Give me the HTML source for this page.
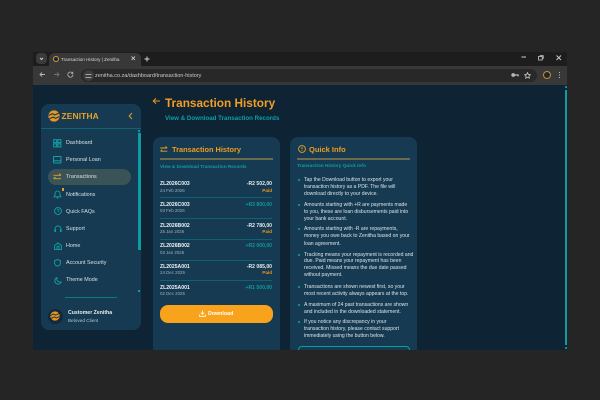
<!DOCTYPE html>
<html><head><meta charset="utf-8"><title>Transaction History | Zenitha</title>
<style>
html{background:#252525}
html,body{margin:0;padding:0;width:600px;height:400px;overflow:hidden;font-family:"Liberation Sans",sans-serif}
body{background:#252525;filter:blur(.25px)}
*{box-sizing:border-box}
div,span.a{position:absolute}
.t{position:absolute;white-space:nowrap;line-height:10px;height:10px}
.nav{left:66px;font-size:5.4px;color:#d5e0e4}
.id{left:160px;font-size:5.1px;color:#f0f4f5;font-weight:bold}
.dt{left:160px;font-size:4.4px;color:#9db0b8}
.am{right:328px;font-size:5.1px;font-weight:bold;color:#e6ecee}
.pl{color:#0d9a9f}
.pd{right:328px;font-size:4.6px;font-weight:bold;color:#f5941d}
.dv{left:160px;width:112px;height:1.2px;background:#0f6272}
.q{left:304px;font-size:5.1px;color:#dbe4e7}
.b{left:298px;width:2px;height:2px;border-radius:50%;background:#13a5aa}
svg{position:absolute;overflow:visible}
</style></head><body>
<!-- chrome -->
<div style="left:33px;top:52px;width:534px;height:14px;background:#1d1d1d"></div>
<div style="left:33px;top:66px;width:534px;height:19px;background:#383838"></div>
<div style="left:36px;top:53px;width:11px;height:11px;border-radius:4px;background:#3b3b3b"></div>
<svg style="left:36px;top:53px" width="11" height="11"><path d="M4 5l1.5 1.5L7 5" fill="none" stroke="#ccc" stroke-width="1"/></svg>
<div style="left:49px;top:53px;width:92px;height:14px;border-radius:5px 5px 0 0;background:#383838"></div>
<div style="left:53px;top:56px;width:6px;height:6px;border-radius:50%;background:#10283a;border:1px solid #e0992a"></div>
<div class="t" style="left:61px;top:54.5px;font-size:4.6px;color:#d8d8d8">Transaction History | Zenitha</div>
<svg style="left:131px;top:56px" width="5" height="5"><path d="M.5 .5l3.5 3.5M4 .5L.5 4" stroke="#ddd" stroke-width=".8"/></svg>
<svg style="left:144px;top:56px" width="6" height="6"><path d="M3 .5v5M.5 3h5" stroke="#ddd" stroke-width=".9"/></svg>
<svg style="left:39px;top:71px" width="7" height="7"><path d="M6 3.5H1M3 1.5l-2 2 2 2" fill="none" stroke="#b5b5b5" stroke-width=".9"/></svg>
<svg style="left:53px;top:71px" width="7" height="7"><path d="M1 3.5h5M4 1.5l2 2-2 2" fill="none" stroke="#717171" stroke-width=".9"/></svg>
<svg style="left:67px;top:71px" width="7" height="7"><path d="M5.6 2.2A2.6 2.6 0 1 0 6 3.5M5.8 .8v1.7H4.1" fill="none" stroke="#b5b5b5" stroke-width=".8"/></svg>
<div style="left:81px;top:69px;width:456px;height:13px;border-radius:7px;background:#282828"></div>
<div style="left:83px;top:70px;width:11px;height:11px;border-radius:50%;background:#3c3c3c"></div>
<svg style="left:85px;top:72.5px" width="7" height="6"><path d="M.5 1.5h6M.5 4.5h6" stroke="#c8c8c8" stroke-width=".8"/></svg>
<div class="t" style="left:95px;top:70.5px;font-size:5.5px;color:#c9c9c9">zenitha.co.za/dashboard/transaction-history</div>
<svg style="left:511px;top:72px" width="8" height="6"><circle cx="2.2" cy="3" r="1.9" fill="#b8b8b8"/><path d="M4 2.4h3.8v2H6.5v-.8H4z" fill="#b8b8b8"/></svg>
<svg style="left:523.5px;top:71.5px" width="7" height="7"><path d="M3.5 .6l.9 1.9 2 .3-1.5 1.4.4 2-1.8-1-1.8 1 .4-2L.6 2.8l2-.3z" fill="none" stroke="#c8c8c8" stroke-width=".8"/></svg>
<div style="left:543px;top:71px;width:8px;height:8px;border-radius:50%;background:#14293a;border:1.5px solid #d48a1f"></div>
<div style="left:559px;top:72px;width:1px;height:1px;background:#bbb;box-shadow:0 2.5px #bbb,0 5px #bbb"></div>
<svg style="left:521px;top:55px" width="6" height="4"><path d="M.5 2h4.5" stroke="#ccc" stroke-width="1"/></svg>
<svg style="left:537.5px;top:55px" width="6" height="6"><rect x=".6" y="1.4" width="3.6" height="3.6" fill="none" stroke="#ccc" stroke-width=".8"/><path d="M1.8 .6h3.4V4" fill="none" stroke="#ccc" stroke-width=".8"/></svg>
<svg style="left:556px;top:55px" width="6" height="6"><path d="M.5 .5l4.5 4.5M5 .5L.5 5" stroke="#ccc" stroke-width=".9"/></svg>

<!-- page -->
<div style="left:33px;top:85px;width:534px;height:265px;background:#0e2334;overflow:hidden">
</div>
<div style="left:564.5px;top:86px;width:2px;height:2px;background:#0e8f98"></div>
<div style="left:564.5px;top:90px;width:2px;height:255px;background:#0e9ca3"></div>
<div style="left:564.5px;top:347px;width:2px;height:2px;background:#0e8f98"></div>

<!-- heading -->
<svg style="left:152px;top:97px" width="9" height="8"><path d="M8 4H1.5M4 1.4L1.3 4 4 6.6" fill="none" stroke="#e8931d" stroke-width="1.1"/></svg>
<div class="t" style="left:165px;top:97.5px;font-size:11.8px;font-weight:bold;color:#f59d1f">Transaction History</div>
<div class="t" style="left:165px;top:114px;font-size:6.2px;font-weight:bold;color:#0c9fa5">View &amp; Download Transaction Records</div>

<!-- sidebar -->
<div style="left:41px;top:104px;width:100px;height:226px;border-radius:8px;background:#163a52"></div>
<div style="left:41px;top:127.5px;width:100px;height:1.5px;background:#0e6474"></div>
<svg style="left:47.5px;top:110px" width="12" height="12" viewBox="0 0 12 12"><circle cx="6" cy="6" r="5.6" fill="#e9971f"/><path d="M.8 5.4L4.5 3.6 6.8 5 11 3M1 9L5.2 7l2.3 1.4L11.2 6.6" fill="none" stroke="#163a52" stroke-width="1.1"/></svg>
<div class="t" style="left:61.5px;top:111px;font-size:8.4px;font-weight:bold;color:#e9a024;letter-spacing:.15px">ZENITHA</div>
<svg style="left:128px;top:112px" width="5" height="8"><path d="M4 1L1.2 4 4 7" fill="none" stroke="#e9a024" stroke-width="1"/></svg>
<div style="left:47.5px;top:169px;width:83.5px;height:16px;border-radius:8px;background:#3a5357"></div>

<svg style="left:53px;top:138.5px" width="9" height="9"><rect x=".7" y=".7" width="3" height="3" fill="none" stroke="#12a3a8"/><rect x="4.9" y=".7" width="3" height="3" fill="none" stroke="#12a3a8"/><rect x=".7" y="4.9" width="3" height="3" fill="none" stroke="#12a3a8"/><rect x="4.9" y="4.9" width="3" height="3" fill="none" stroke="#12a3a8"/></svg>
<svg style="left:53px;top:156px" width="9" height="8"><rect x=".5" y=".5" width="7.5" height="6.5" rx=".6" fill="none" stroke="#12a3a8"/><path d="M.5 4.8h7.5" stroke="#12a3a8"/></svg>
<svg style="left:53px;top:173px" width="9" height="8"><path d="M.5 2.3h7.5M6 .6L8 2.3M8 5.7H.5M2.5 4L.5 5.7" fill="none" stroke="#e9a024" stroke-width=".9"/></svg>
<svg style="left:53px;top:189.5px" width="9" height="9"><path d="M1 6.8h7L7 5.4V3.6a2.5 2.5 0 0 0-5 0v1.8zM3.6 8h1.8" fill="none" stroke="#12a3a8" stroke-width=".9"/></svg>
<div style="left:62px;top:188px;width:1.5px;height:2.5px;background:#e9a024"></div>
<svg style="left:53.5px;top:207px" width="8" height="8"><circle cx="4" cy="4" r="3.4" fill="none" stroke="#12a3a8" stroke-width=".9"/><path d="M3 3.1a1 1 0 1 1 1 1.2v.7" fill="none" stroke="#12a3a8" stroke-width=".7"/></svg>
<svg style="left:53.5px;top:224.5px" width="8" height="8"><path d="M.9 5V4a3.1 3.1 0 0 1 6.2 0v1" fill="none" stroke="#12a3a8" stroke-width=".9"/><rect x=".4" y="4.3" width="1.6" height="2.6" fill="#12a3a8"/><rect x="6" y="4.3" width="1.6" height="2.6" fill="#12a3a8"/></svg>
<svg style="left:53.5px;top:242px" width="8" height="8"><path d="M.6 3.6L4 .7l3.4 2.9v3.8H.6zM3 7.4V5a1 1 0 0 1 2 0v2.4" fill="none" stroke="#12a3a8" stroke-width=".9"/></svg>
<svg style="left:54px;top:259px" width="7" height="8"><path d="M3.5 .6l2.9 1v3l-1 1.7-1.9 1-1.9-1-1-1.7v-3z" fill="none" stroke="#12a3a8" stroke-width=".9"/></svg>
<svg style="left:54px;top:276.5px" width="8" height="8"><path d="M3 .7A3.3 3.3 0 1 0 7.2 5 3.4 3.4 0 0 1 3 .7z" fill="none" stroke="#12a3a8" stroke-width=".9"/></svg>

<div class="t nav" style="top:137.5px">Dashboard</div>
<div class="t nav" style="top:155px">Personal Loan</div>
<div class="t nav" style="top:172px">Transactions</div>
<div class="t nav" style="top:189.5px">Notifications</div>
<div class="t nav" style="top:206.5px">Quick FAQs</div>
<div class="t nav" style="top:223.5px">Support</div>
<div class="t nav" style="top:241px">Home</div>
<div class="t nav" style="top:258px">Account Security</div>
<div class="t nav" style="top:275px">Theme Mode</div>

<div style="left:138px;top:130px;width:2px;height:1.5px;background:#0e9ca3"></div>
<div style="left:138px;top:133px;width:2.5px;height:117px;background:#0e9ca3"></div>
<div style="left:138px;top:290px;width:2px;height:1.5px;background:#0e9ca3"></div>
<div style="left:65px;top:297px;width:52px;height:1px;background:#0e7a86"></div>
<div style="left:47.5px;top:308.5px;width:15px;height:15px;border-radius:50%;background:#12283b"></div>
<svg style="left:50px;top:311px" width="10" height="10" viewBox="0 0 12 12"><circle cx="6" cy="6" r="5.6" fill="#e9971f"/><path d="M.8 5.4L4.5 3.6 6.8 5 11 3M1 9L5.2 7l2.3 1.4L11.2 6.6" fill="none" stroke="#12283b" stroke-width="1.1"/></svg>
<div class="t" style="left:68px;top:308px;font-size:5.2px;font-weight:bold;color:#e6ecee">Customer Zenitha</div>
<div class="t" style="left:68px;top:316px;font-size:4.7px;color:#b4c3ca">Beloved Client</div>

<!-- card 1 -->
<div style="left:153px;top:137px;width:127px;height:213px;border-radius:8px 8px 0 0;background:#163a52"></div>
<svg style="left:160px;top:145.5px" width="8" height="7"><path d="M.3 2h6.8M5.5 .5L7.2 2M7.3 5.2H.5M2.2 3.7L.5 5.2" fill="none" stroke="#e9a024" stroke-width=".9"/></svg>
<div class="t" style="left:172px;top:144.5px;font-size:7.4px;font-weight:bold;color:#ee9c22">Transaction History</div>
<div style="left:160px;top:158px;width:113px;height:1.5px;background:#6b6b50"></div>
<div class="t" style="left:160px;top:161.5px;font-size:4.7px;font-weight:bold;color:#0c9fa5">View &amp; Download Transaction Records</div>

<div class="t id" style="top:179px">ZL2026C003</div><div class="t dt" style="top:185.5px">24 Feb 2026</div><div class="t am" style="top:179px">-R2 502,00</div><div class="t pd" style="top:185.5px">Paid</div>
<div class="dv" style="top:197px"></div>
<div class="t id" style="top:199.5px">ZL2026C003</div><div class="t dt" style="top:206px">03 Feb 2026</div><div class="t am pl" style="top:199.5px">+R3 800,00</div>
<div class="dv" style="top:218px"></div>
<div class="t id" style="top:220.5px">ZL2026B002</div><div class="t dt" style="top:226.5px">25 Jan 2026</div><div class="t am" style="top:220.5px">-R2 780,00</div><div class="t pd" style="top:226.5px">Paid</div>
<div class="dv" style="top:239px"></div>
<div class="t id" style="top:241px">ZL2026B002</div><div class="t dt" style="top:247.5px">03 Jan 2026</div><div class="t am pl" style="top:241px">+R2 000,00</div>
<div class="dv" style="top:259.5px"></div>
<div class="t id" style="top:261.5px">ZL2025A001</div><div class="t dt" style="top:268px">24 Dec 2025</div><div class="t am" style="top:261.5px">-R2 085,00</div><div class="t pd" style="top:268px">Paid</div>
<div class="dv" style="top:280px"></div>
<div class="t id" style="top:282.5px">ZL2025A001</div><div class="t dt" style="top:289px">02 Dec 2025</div><div class="t am pl" style="top:282.5px">+R1 500,00</div>

<div style="left:160px;top:305px;width:112.5px;height:18px;border-radius:8px;background:#f9a21c"></div>
<svg style="left:198.5px;top:310px" width="7" height="7"><path d="M3.5 .5v3.6M1.9 2.7l1.6 1.6 1.6-1.6M.6 4.6v1.7h5.8V4.6" fill="none" stroke="#fff" stroke-width=".8"/></svg>
<div class="t" style="left:208px;top:308.5px;font-size:5.3px;font-weight:bold;color:#fff">Download</div>

<!-- card 2 -->
<div style="left:290px;top:137px;width:127px;height:213px;border-radius:8px 8px 0 0;background:#163a52"></div>
<svg style="left:297.5px;top:145px" width="8" height="8"><circle cx="4" cy="4" r="3.4" fill="none" stroke="#e9a024" stroke-width=".9"/><path d="M4 2v2.4M4 5.2v.8" stroke="#e9a024" stroke-width=".9"/></svg>
<div class="t" style="left:309px;top:144.5px;font-size:7.5px;font-weight:bold;color:#ee9c22">Quick Info</div>
<div style="left:297px;top:158px;width:113px;height:1.5px;background:#6b6b50"></div>
<div class="t" style="left:297px;top:161.5px;font-size:4.75px;font-weight:bold;color:#0c9fa5">Transaction History Quick Info</div>

<div class="b" style="top:179px"></div>
<div class="t q" style="top:175px">Tap the Download button to export your</div>
<div class="t q" style="top:182px">transaction history as a PDF. The file will</div>
<div class="t q" style="top:189px">download directly to your device.</div>
<div class="b" style="top:203.5px"></div>
<div class="t q" style="top:199.5px">Amounts starting with +R are payments made</div>
<div class="t q" style="top:206.5px">to you, these are loan disbursements paid into</div>
<div class="t q" style="top:213.5px">your bank account.</div>
<div class="b" style="top:228px"></div>
<div class="t q" style="top:224px">Amounts starting with -R are repayments,</div>
<div class="t q" style="top:231px">money you owe back to Zenitha based on your</div>
<div class="t q" style="top:239px">loan agreement.</div>
<div class="b" style="top:253.5px"></div>
<div class="t q" style="top:249.5px">Tracking means your repayment is recorded and</div>
<div class="t q" style="top:256px">due. Paid means your repayment has been</div>
<div class="t q" style="top:263px">received. Missed means the due date passed</div>
<div class="t q" style="top:270px">without payment.</div>
<div class="b" style="top:285.5px"></div>
<div class="t q" style="top:281.5px">Transactions are shown newest first, so your</div>
<div class="t q" style="top:288.5px">most recent activity always appears at the top.</div>
<div class="b" style="top:303.5px"></div>
<div class="t q" style="top:299.5px">A maximum of 24 past transactions are shown</div>
<div class="t q" style="top:306.5px">and included in the downloaded statement.</div>
<div class="b" style="top:321px"></div>
<div class="t q" style="top:317px">If you notice any discrepancy in your</div>
<div class="t q" style="top:324px">transaction history, please contact support</div>
<div class="t q" style="top:331px">immediately using the button below.</div>
<div style="left:298px;top:346px;width:111.5px;height:4px;border:1px solid #0e9ca3;border-bottom:0;border-radius:6px 6px 0 0"></div>
</body></html>
